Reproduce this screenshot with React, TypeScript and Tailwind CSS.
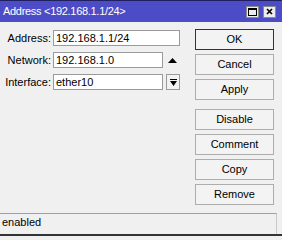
import React from "react";

const font = { fontFamily: '"Liberation Sans", Arial, sans-serif' };

function Btn({ label, def }: { label: string; def?: boolean }) {
  return (
    <div
      className={`h-[21px] w-[79px] flex items-center justify-center text-[11px] text-black bg-[#f3f3f3] border ${
        def ? "border-[#333]" : "border-[#adadad]"
      }`}
    >
      {label}
    </div>
  );
}

export default function App() {
  return (
    <div className="w-[282px] h-[240px] flex flex-col bg-[#f0f0f0]" style={font}>
      <div className="h-[22px] bg-[#4c4cc6] border-t border-[#202060] flex items-center pl-[3px] pr-[6px]">
        <span className="text-white text-[11px] tracking-[-0.3px] flex-1">Address &lt;192.168.1.1/24&gt;</span>
        <div className="flex gap-[4px]">
          <div className="w-[13px] h-[12px] bg-[#ececec] border border-[#8a8a8a] flex items-center justify-center">
            <div className="w-[9px] h-[8px] border border-black border-t-2" />
          </div>
          <div className="w-[13px] h-[12px] bg-[#ececec] border border-[#8a8a8a] flex items-center justify-center">
            <svg width="7" height="7" viewBox="0 0 7 7">
              <path d="M1 1 L6 6 M6 1 L1 6" stroke="#000" strokeWidth="1.6" />
            </svg>
          </div>
        </div>
      </div>
      <div className="h-[191px] flex">
        <div className="w-[195px] pt-[8px] flex flex-col gap-[6px]">
          <div className="flex items-center h-[16px]">
            <span className="w-[53px] text-right pr-[2px] text-[11px]">Address:</span>
            <div className="w-[127px] h-[16px] bg-white border border-[#9a9a9a] text-[11px] pl-[2px] leading-[14px]">192.168.1.1/24</div>
          </div>
          <div className="flex items-center h-[16px]">
            <span className="w-[53px] text-right pr-[2px] text-[11px]">Network:</span>
            <div className="w-[110px] h-[16px] bg-white border border-[#9a9a9a] text-[11px] pl-[2px] leading-[14px]">192.168.1.0</div>
            <div className="w-[19px] flex justify-center">
              <svg width="9" height="5" viewBox="0 0 9 5"><path d="M0 5 L4.5 0 L9 5 Z" fill="#000" /></svg>
            </div>
          </div>
          <div className="flex items-center h-[16px]">
            <span className="w-[53px] text-right pr-[2px] text-[11px]">Interface:</span>
            <div className="w-[110px] h-[16px] bg-white border border-[#9a9a9a] text-[11px] pl-[2px] leading-[14px]">ether10</div>
            <div className="ml-[3px] w-[14px] h-[16px] bg-[#f3f3f3] border border-[#9a9a9a] flex items-center justify-center">
              <svg width="7" height="7" viewBox="0 0 7 7"><path d="M0 0 H7 V1 H0 Z M0 2 H7 L3.5 7 Z" fill="#000" /></svg>
            </div>
          </div>
        </div>
        <div className="pt-[7px] flex flex-col gap-[4px]">
          <Btn label="OK" def />
          <Btn label="Cancel" />
          <Btn label="Apply" />
          <div className="h-[1px]" />
          <Btn label="Disable" />
          <Btn label="Comment" />
          <Btn label="Copy" />
          <Btn label="Remove" />
        </div>
      </div>
      <div className="h-[21px] w-[277px] border-t border-[#a0a0a0] border-r border-r-[#c8c8c8] pl-[2px] pt-[2px] leading-[13px] text-[11px] text-black">enabled</div>
      <div className="h-[2px] bg-[#333]" />
      <div className="flex-1" />
    </div>
  );
}
